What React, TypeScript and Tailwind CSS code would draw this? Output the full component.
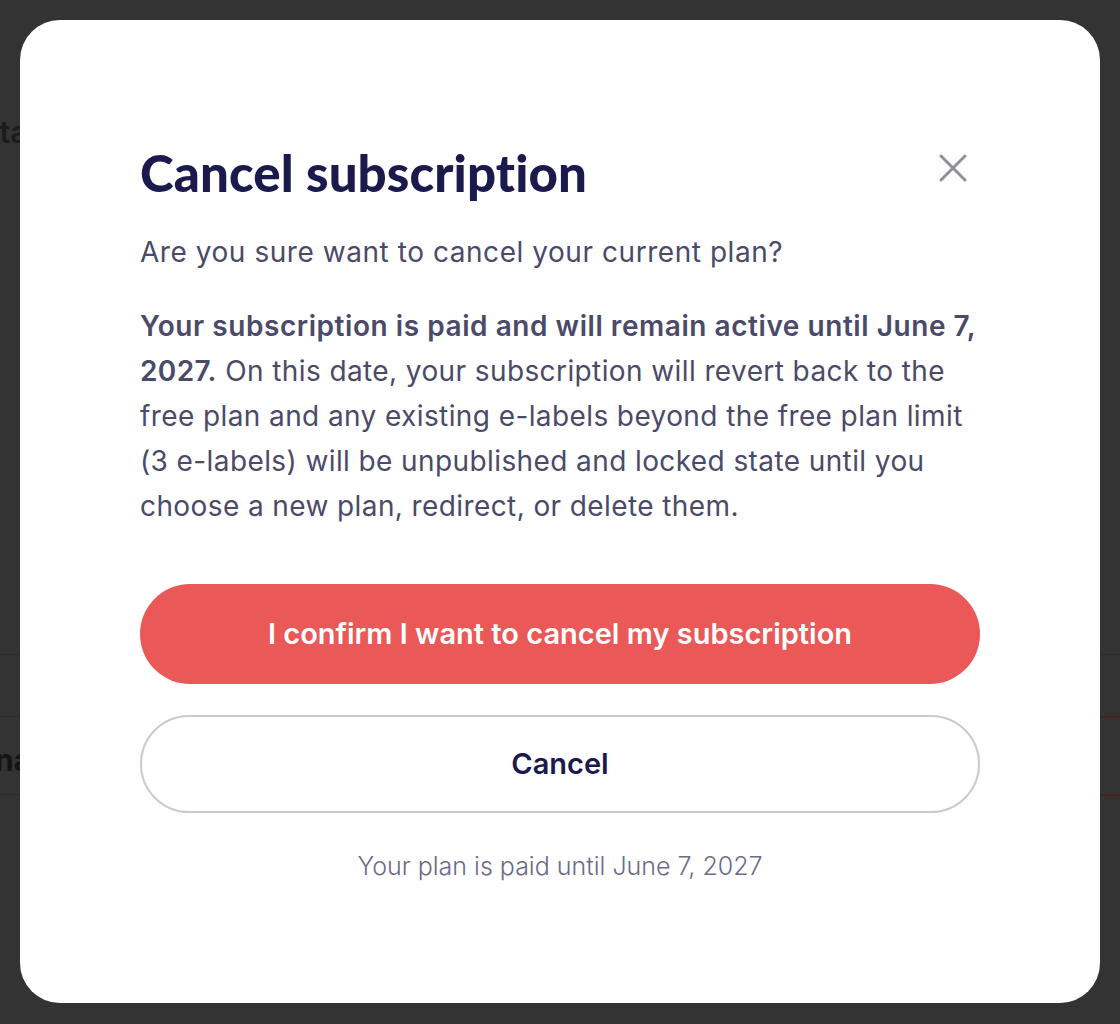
import React from "react";

export default function App() {
  const body = { fontFamily: '"Inter", "Noto Sans", sans-serif' };
  const title = { fontFamily: '"Lato", "Noto Sans", sans-serif' };
  return (
    <div className="relative h-[1024px] w-[1120px] overflow-hidden bg-[#333333]" style={body}>
      {/* dimmed page behind the dialog */}
      <div className="absolute inset-0">
        <div className="absolute left-[-40px] top-[110px] text-[30px] font-semibold text-[#1c1c1c]">Deta</div>
        <div className="absolute left-0 right-0 top-[654px] h-px bg-[#2b2b2b]" />
        <div className="absolute left-0 w-[40px] top-[716px] h-px bg-[#2b2b2b]" />
        <div className="absolute left-0 w-[40px] top-[794px] h-px bg-[#2b2b2b]" />
        <div className="absolute left-[-50px] top-[738px] text-[30px] font-bold text-[#141414]">Plana</div>
        <div className="absolute left-[1040px] top-[716px] flex h-[80px] w-[140px] items-center justify-end rounded-full border-2 border-[#4a1f1f] pr-[2px]">
          <div className="h-[30px] w-[30px] rounded-full border-2 border-[#4a1f1f]" />
        </div>
      </div>

      <div className="relative flex h-full w-full p-[20px]">
        <div className="flex h-[983px] w-[1080px] flex-col rounded-[40px] bg-white px-[120px] pt-[123px]">
          <div className="flex items-start justify-between">
            <h1 className="text-[51px] font-black leading-[60px] tracking-[0.1px] text-[#1b1a4d]" style={title}>Cancel subscription</h1>
            <button className="mt-[11px] mr-[13px] text-[#8f8f9c]" aria-label="Close">
              <svg width="28" height="28" viewBox="0 0 28 28" fill="none" stroke="currentColor" strokeWidth="3" strokeLinecap="round">
                <path d="M2 2 L26 26 M26 2 L2 26" />
              </svg>
            </button>
          </div>
          <p className="mt-[29px] whitespace-nowrap text-[28px] leading-[40px] tracking-[0.55px] text-[#4b4a68]">Are you sure want to cancel your current plan?</p>
          <p className="mt-[32px] whitespace-nowrap text-[28px] leading-[45px] tracking-[0.4px] text-[#4b4a68]">
            <span className="font-semibold tracking-[0.55px]">Your subscription is paid and will remain active until June 7,</span>
            <br />
            <span className="font-semibold">2027.</span> On this date, your subscription will revert back to the
            <br />
            free plan and any existing e-labels beyond the free plan limit
            <br />
            (3 e-labels) will be unpublished and locked state until you
            <br />
            choose a new plan, redirect, or delete them.
          </p>
          <button className="mt-[55px] h-[100px] w-full shrink-0 rounded-full bg-[#ea5858] text-[29px] font-semibold text-white">
            I confirm I want to cancel my subscription
          </button>
          <button className="mt-[31px] h-[98px] w-full shrink-0 rounded-full border-2 border-[#c9c9d0] bg-white text-[29px] font-semibold text-[#1b1a4d]">
            Cancel
          </button>
          <p className="mt-[36px] text-center text-[25px] font-light leading-[34px] text-[#6c6b88]">Your plan is paid until June 7, 2027</p>
        </div>
      </div>
    </div>
  );
}
